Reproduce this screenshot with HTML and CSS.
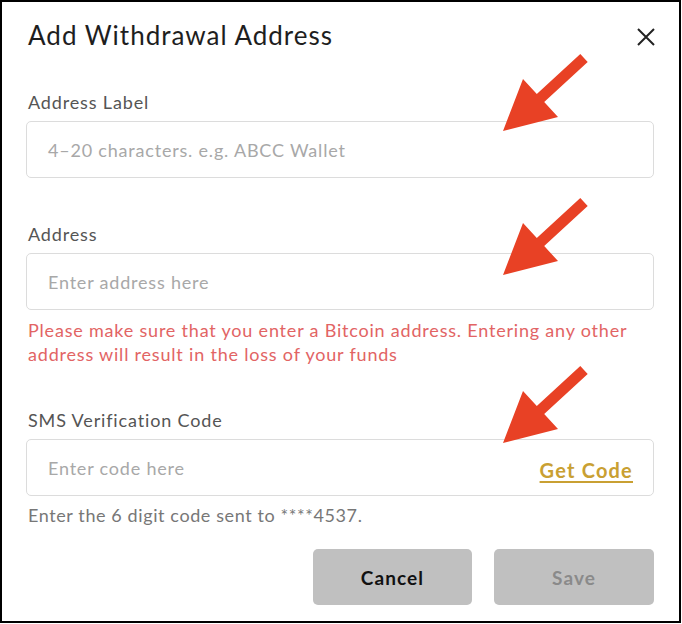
FILE: index.html
```html
<!DOCTYPE html>
<html>
<head>
<meta charset="utf-8">
<link rel="stylesheet" href="styles.css">
</head>
<body>
<div class="modal">
  <div class="header">
    <h1 class="title">Add Withdrawal Address</h1>
    <svg class="close" width="18" height="18" viewBox="0 0 18 18"><path d="M1 1 L17 17 M17 1 L1 17" stroke="#222" stroke-width="2" fill="none"/></svg>
  </div>

  <div class="field field-first">
    <div class="label">Address Label</div>
    <div class="input"><span class="ph">4–20 characters. e.g. ABCC Wallet</span></div>
  </div>

  <div class="field field-second">
    <div class="label">Address</div>
    <div class="input"><span class="ph">Enter address here</span></div>
    <p class="warn">Please make sure that you enter a Bitcoin address. Entering any other address will result in the loss of your funds</p>
  </div>

  <div class="field field-third">
    <div class="label">SMS Verification Code</div>
    <div class="input"><span class="ph">Enter code here</span><a class="getcode">Get Code</a></div>
    <p class="hint">Enter the 6 digit code sent to ****4537.</p>
  </div>

  <div class="actions">
    <button class="btn btn-cancel">Cancel</button>
    <button class="btn btn-save">Save</button>
  </div>

  <svg class="arrow arrow-1" width="92" height="82" viewBox="0 0 92 82"><polygon points="3,79 23,27 36.8,41.9 80.3,1.9 87.7,10.1 44.2,50.1 58,65" fill="#e84125"/></svg>
  <svg class="arrow arrow-2" width="92" height="82" viewBox="0 0 92 82"><polygon points="3,79 23,27 36.8,41.9 80.3,1.9 87.7,10.1 44.2,50.1 58,65" fill="#e84125"/></svg>
  <svg class="arrow arrow-3" width="92" height="82" viewBox="0 0 92 82"><polygon points="3,79 23,27 36.8,41.9 80.3,1.9 87.7,10.1 44.2,50.1 58,65" fill="#e84125"/></svg>
</div>
</body>
</html>
```

FILE: styles.css
```css
* { box-sizing: border-box; }
html, body { margin: 0; padding: 0; background: #fff; }
body { font-family: "Lato", "Noto Sans", sans-serif; }

.modal {
  position: relative;
  width: 681px;
  height: 623px;
  border: 2px solid #000;
  padding: 17px 25px 0 24px;
  display: flex;
  flex-direction: column;
  background: #fff;
}

.header {
  display: flex;
  justify-content: space-between;
  align-items: center;
  height: 32px;
}
.title {
  margin: 0 0 0 2px;
  font-size: 26px;
  font-weight: 400;
  line-height: 32px;
  letter-spacing: 1px;
  color: #1e1e1e;
}
.close { margin-right: -1px; margin-top: 4px; }

.field { display: flex; flex-direction: column; }
.field-first { margin-top: 39px; }
.field-second { margin-top: 44px; }
.field-third { margin-top: 42px; }

.label {
  font-size: 18px;
  line-height: 24px;
  letter-spacing: 0.85px;
  color: #555;
  margin: 0 0 7px 2px;
}
.input {
  height: 57px;
  border: 1px solid #dcdcdc;
  border-radius: 5px;
  padding: 0 20px 0 21px;
  display: flex;
  align-items: center;
  justify-content: space-between;
}
.ph {
  font-size: 18px;
  letter-spacing: 0.8px;
  color: #a8a8a8;
}
.getcode {
  font-size: 20px;
  font-weight: 700;
  letter-spacing: 1.2px;
  color: #c9a032;
  text-decoration: underline;
  text-underline-offset: 3px;
  margin-top: 5px;
}
.warn {
  margin: 8px 0 0 2px;
  font-size: 18px;
  line-height: 24px;
  letter-spacing: 0.8px;
  color: #e26464;
}
.hint {
  margin: 7px 0 0 2px;
  font-size: 18px;
  line-height: 24px;
  letter-spacing: 0.6px;
  color: #777;
}

.actions {
  margin-top: 22px;
  display: flex;
  justify-content: flex-end;
  gap: 22px;
}
.btn {
  height: 56px;
  border: none;
  border-radius: 5px;
  background: #c0c0c0;
  font-family: "Lato", "Noto Sans", sans-serif;
  font-size: 19px;
  font-weight: 700;
  letter-spacing: 1.1px;
}
.btn-cancel { width: 159px; color: #111; }
.btn-save { width: 160px; color: #8a8a8a; }

.arrow { position: absolute; left: 498px; }
.arrow-1 { top: 50px; }
.arrow-2 { top: 194px; }
.arrow-3 { top: 362px; }
```
